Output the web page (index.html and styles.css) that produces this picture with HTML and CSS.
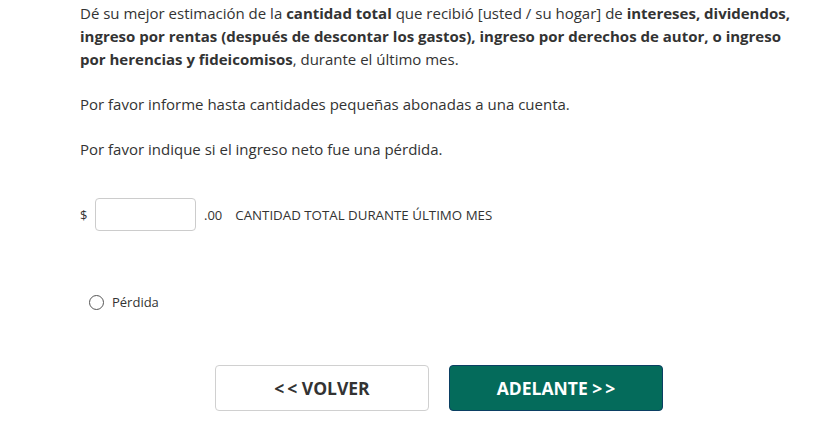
FILE: index.html
```html
<!DOCTYPE html>
<html lang="es">
<head>
<meta charset="utf-8">
<link rel="stylesheet" href="styles.css">
</head>
<body>
<main class="page">
  <p class="intro">Dé su mejor estimación de la <b>cantidad total</b> que recibió [usted / su hogar] de <b>intereses, dividendos, ingreso por rentas (después de descontar los gastos), ingreso por derechos de autor, o ingreso por herencias y fideicomisos</b>, durante el último mes.</p>
  <p class="note">Por favor informe hasta cantidades pequeñas abonadas a una cuenta.</p>
  <p class="note">Por favor indique si el ingreso neto fue una pérdida.</p>
  <div class="amount-row">
    <span class="cur">$</span>
    <input class="amount" type="text" aria-label="Cantidad">
    <span class="cents">.00</span>
    <span class="label">CANTIDAD TOTAL DURANTE ÚLTIMO MES</span>
  </div>
  <label class="radio-row">
    <span class="radio"></span>
    <span>Pérdida</span>
  </label>
  <div class="nav">
    <button class="btn back" type="button">&lt;&thinsp;&lt; VOLVER</button>
    <button class="btn next" type="button">ADELANTE &gt;&thinsp;&gt;</button>
  </div>
</main>
</body>
</html>
```
FILE: styles.css
```css
html, body {
  margin: 0;
  padding: 0;
  background: #fff;
}
body {
  font-family: "Open Sans", "Noto Sans", sans-serif;
  font-size: 15px;
  color: #333;
}
.page {
  width: 718px;
  margin-left: 80px;
  padding-top: 1px;
}
p {
  margin: 0;
  line-height: 23px;
}
.intro {
  margin-top: 1px;
}
.intro b {
  font-weight: 700;
}
.note {
  margin-top: 22px;
}
.amount-row {
  display: flex;
  align-items: center;
  margin-top: 37px;
  font-size: 13px;
}
.cur {
  width: 15px;
}
.amount {
  box-sizing: border-box;
  width: 101px;
  height: 33px;
  border: 1px solid #ccc;
  border-radius: 4px;
  margin: 0;
  padding: 0 8px;
  font: inherit;
}
.cents {
  margin-left: 8px;
}
.label {
  margin-left: 13px;
  font-size: 13.3px;
}
.radio-row {
  display: flex;
  align-items: center;
  gap: 8px;
  margin-top: 62px;
  margin-left: 9px;
  font-size: 13px;
}
.radio {
  box-sizing: border-box;
  width: 15px;
  height: 15px;
  border: 1px solid #555;
  border-radius: 50%;
}
.nav {
  display: flex;
  justify-content: center;
  gap: 20px;
  margin-top: 54px;
}
.btn {
  box-sizing: border-box;
  width: 214px;
  height: 46px;
  border-radius: 4px;
  font-family: inherit;
  font-size: 17.5px;
  font-weight: 700;
  cursor: pointer;
}
.back {
  background: #fff;
  border: 1px solid #d0d0d0;
  color: #333;
}
.next {
  background: #046b5b;
  border: 1px solid #0b3f63;
  color: #fff;
}
```
